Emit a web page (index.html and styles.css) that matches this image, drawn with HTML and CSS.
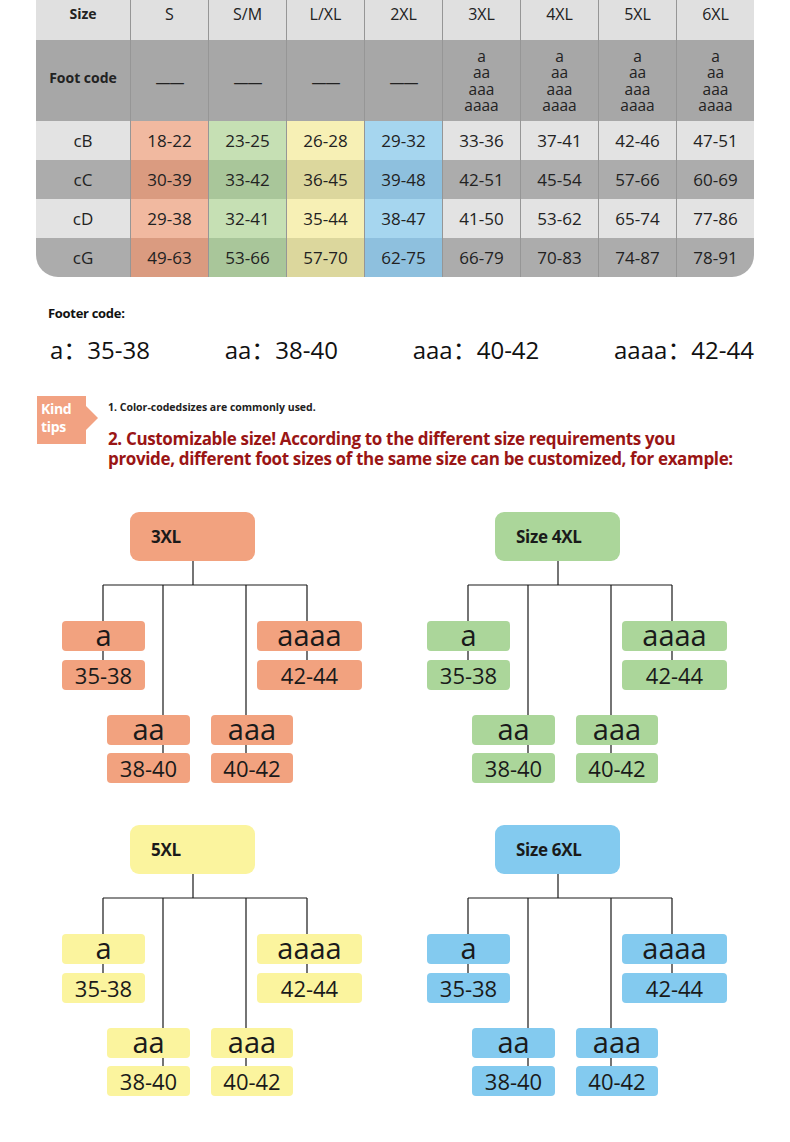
FILE: index.html
```html
<!DOCTYPE html>
<html lang="en">
<head>
<meta charset="utf-8">
<title>Size chart</title>
<link rel="stylesheet" href="styles.css">
</head>
<body>
<div class="page">
  <div class="size-table">
    <div class="row r-head">
      <div class="cell label">Size</div>
      <div class="cell">S</div><div class="cell">S/M</div><div class="cell">L/XL</div><div class="cell">2XL</div>
      <div class="cell">3XL</div><div class="cell">4XL</div><div class="cell">5XL</div><div class="cell">6XL</div>
    </div>
    <div class="row r-foot">
      <div class="cell label">Foot code</div>
      <div class="cell"><span class="dash">——</span></div><div class="cell"><span class="dash">——</span></div><div class="cell"><span class="dash">——</span></div><div class="cell"><span class="dash">——</span></div>
      <div class="cell stack">a<br>aa<br>aaa<br>aaaa</div>
      <div class="cell stack">a<br>aa<br>aaa<br>aaaa</div>
      <div class="cell stack">a<br>aa<br>aaa<br>aaaa</div>
      <div class="cell stack">a<br>aa<br>aaa<br>aaaa</div>
    </div>
    <div class="row r-lt">
      <div class="cell code">cB</div>
      <div class="cell s">18-22</div><div class="cell sm">23-25</div><div class="cell lxl">26-28</div><div class="cell xxl">29-32</div>
      <div class="cell">33-36</div><div class="cell">37-41</div><div class="cell">42-46</div><div class="cell">47-51</div>
    </div>
    <div class="row r-dk">
      <div class="cell code">cC</div>
      <div class="cell s">30-39</div><div class="cell sm">33-42</div><div class="cell lxl">36-45</div><div class="cell xxl">39-48</div>
      <div class="cell">42-51</div><div class="cell">45-54</div><div class="cell">57-66</div><div class="cell">60-69</div>
    </div>
    <div class="row r-lt">
      <div class="cell code">cD</div>
      <div class="cell s">29-38</div><div class="cell sm">32-41</div><div class="cell lxl">35-44</div><div class="cell xxl">38-47</div>
      <div class="cell">41-50</div><div class="cell">53-62</div><div class="cell">65-74</div><div class="cell">77-86</div>
    </div>
    <div class="row r-dk">
      <div class="cell code">cG</div>
      <div class="cell s">49-63</div><div class="cell sm">53-66</div><div class="cell lxl">57-70</div><div class="cell xxl">62-75</div>
      <div class="cell">66-79</div><div class="cell">70-83</div><div class="cell">74-87</div><div class="cell">78-91</div>
    </div>
  </div>

  <div class="footer-code">
    <div class="fc-title">Footer code:</div>
    <div class="fc-values">
      <span>a：35-38</span>
      <span>aa：38-40</span>
      <span>aaa：40-42</span>
      <span>aaaa：42-44</span>
    </div>
  </div>

  <div class="tips">
    <div class="badge">Kind<br>tips</div>
    <div class="tips-text">
      <p class="tip1">1. Color-codedsizes are commonly used.</p>
      <p class="tip2">2. Customizable size! According to the different size requirements you<br>provide, different foot sizes of the same size can be customized, for example:</p>
    </div>
  </div>

  <div class="trees">
    <div class="tree orange">
      <svg class="lines" width="300" height="271" viewBox="0 0 300 271">
        <path d="M131 49V73M41 73H245M41 73V109M101 73V203M184 73V203M245 73V109M41 139V148M245 139V148M101 233V241M184 233V241"/>
      </svg>
      <div class="node top">3XL</div>
      <div class="node n1 k">a</div><div class="node n1v v">35-38</div>
      <div class="node n4 k">aaaa</div><div class="node n4v v">42-44</div>
      <div class="node n2 k">aa</div><div class="node n2v v">38-40</div>
      <div class="node n3 k">aaa</div><div class="node n3v v">40-42</div>
    </div>
    <div class="tree green">
      <svg class="lines" width="300" height="271" viewBox="0 0 300 271">
        <path d="M131 49V73M41 73H245M41 73V109M101 73V203M184 73V203M245 73V109M41 139V148M245 139V148M101 233V241M184 233V241"/>
      </svg>
      <div class="node top">Size 4XL</div>
      <div class="node n1 k">a</div><div class="node n1v v">35-38</div>
      <div class="node n4 k">aaaa</div><div class="node n4v v">42-44</div>
      <div class="node n2 k">aa</div><div class="node n2v v">38-40</div>
      <div class="node n3 k">aaa</div><div class="node n3v v">40-42</div>
    </div>
    <div class="tree yellow">
      <svg class="lines" width="300" height="271" viewBox="0 0 300 271">
        <path d="M131 49V73M41 73H245M41 73V109M101 73V203M184 73V203M245 73V109M41 139V148M245 139V148M101 233V241M184 233V241"/>
      </svg>
      <div class="node top">5XL</div>
      <div class="node n1 k">a</div><div class="node n1v v">35-38</div>
      <div class="node n4 k">aaaa</div><div class="node n4v v">42-44</div>
      <div class="node n2 k">aa</div><div class="node n2v v">38-40</div>
      <div class="node n3 k">aaa</div><div class="node n3v v">40-42</div>
    </div>
    <div class="tree blue">
      <svg class="lines" width="300" height="271" viewBox="0 0 300 271">
        <path d="M131 49V73M41 73H245M41 73V109M101 73V203M184 73V203M245 73V109M41 139V148M245 139V148M101 233V241M184 233V241"/>
      </svg>
      <div class="node top">Size 6XL</div>
      <div class="node n1 k">a</div><div class="node n1v v">35-38</div>
      <div class="node n4 k">aaaa</div><div class="node n4v v">42-44</div>
      <div class="node n2 k">aa</div><div class="node n2v v">38-40</div>
      <div class="node n3 k">aaa</div><div class="node n3v v">40-42</div>
    </div>
  </div>
</div>
</body>
</html>
```

FILE: styles.css
```css
* { box-sizing: border-box; }
html, body { margin: 0; padding: 0; background: #ffffff; }
body { font-family: "Open Sans", "Noto Sans", "Noto Sans CJK SC", sans-serif; color: #1e1e1e; }
.page { width: 790px; height: 1142px; overflow: hidden; }

/* ---------- table ---------- */
.size-table {
  margin-left: 36px;
  width: 718px;
  display: grid;
  grid-template-columns: 94px repeat(8, 78px);
  grid-template-rows: 40px 81px repeat(4, 39px);
  border-radius: 0 0 22px 22px;
  overflow: hidden;
}
.row { display: contents; }
.cell {
  display: flex;
  align-items: center;
  justify-content: center;
  font-size: 16px;
  color: #222;
  border-left: 1px solid #969696;
  text-align: center;
}
.cell.label, .cell.code { border-left: none; }
.r-head .cell { background: #e0e0e0; align-items: flex-start; padding-top: 3px; font-size: 16px; }
.r-head .label { font-weight: 700; font-size: 14px; padding-top: 4px; }
.r-foot .cell { background: #a7a7a7; }
.r-foot .label { font-weight: 700; font-size: 14px; padding-bottom: 6px; }
.dash { font-size: 15px; letter-spacing: -1px; color: #222; position: relative; top: 1px; }
.stack { font-size: 15.5px; line-height: 16.5px; }
.r-lt .cell { background: #e3e3e3; }
.r-dk .cell { background: #acacac; }
.r-lt .cell, .r-dk .cell { font-size: 17px; }
.r-lt .s { background: #f1b9a0; }
.r-dk .s { background: #da9b80; }
.r-lt .sm { background: #c6e0b4; }
.r-dk .sm { background: #a9c69a; }
.r-lt .lxl { background: #f7f0b5; }
.r-dk .lxl { background: #dcd79d; }
.r-lt .xxl { background: #a6d6ef; }
.r-dk .xxl { background: #8ec0de; }

/* ---------- footer code ---------- */
.footer-code { margin-top: 27px; }
.fc-title {
  margin-left: 48px;
  font-size: 13px;
  font-weight: 700;
  letter-spacing: -0.3px;
  line-height: 18px;
  color: #111;
}
.fc-values {
  margin-top: 12px;
  margin-left: 50px;
  width: 704px;
  display: flex;
  justify-content: space-between;
  font-size: 24px;
  line-height: 32px;
  color: #111;
}

/* ---------- tips ---------- */
.tips {
  margin-top: 30px;
  margin-left: 37px;
  display: flex;
  gap: 22px;
}
.badge {
  position: relative;
  width: 49px;
  height: 48px;
  background: #f2a282;
  color: #fff;
  font-weight: 700;
  font-size: 14px;
  line-height: 18px;
  letter-spacing: -0.3px;
  padding: 4px 0 0 4px;
  flex: none;
}
.badge::after {
  content: "";
  position: absolute;
  left: 48px;
  top: 9px;
  border-left: 13px solid #f2a282;
  border-top: 13px solid transparent;
  border-bottom: 13px solid transparent;
}
.tips-text { padding-top: 4px; }
.tip1 {
  margin: 0;
  font-size: 10.5px;
  font-weight: 700;
  line-height: 14px;
  color: #222;
}
.tip2 {
  margin: 15px 0 0;
  font-size: 17px;
  font-weight: 700;
  line-height: 19.5px;
  letter-spacing: -0.35px;
  color: #9a1515;
}

/* ---------- trees ---------- */
.trees {
  margin-top: 44px;
  margin-left: 62px;
  display: grid;
  grid-template-columns: 300px 300px;
  column-gap: 65px;
  row-gap: 42px;
}
.tree { position: relative; width: 300px; height: 271px; }
.lines { position: absolute; left: 0; top: 0; }
.lines path { fill: none; stroke: #1a1a1a; stroke-width: 1.2; }
.node {
  position: absolute;
  display: flex;
  align-items: center;
  justify-content: center;
  border-radius: 4px;
  color: #1a1a1a;
}
.node.top {
  left: 68px; top: 0; width: 125px; height: 49px;
  border-radius: 9px;
  justify-content: flex-start;
  padding-left: 21px;
  font-weight: 700;
  font-size: 17px;
  letter-spacing: -0.3px;
}
.node.k { font-size: 29px; height: 30px; line-height: 30px; padding-bottom: 3px; }
.node.v { font-size: 22px; height: 30px; }
.n1, .n1v { left: 0; width: 83px; }
.n4, .n4v { left: 195px; width: 105px; }
.n2, .n2v { left: 45px; width: 83px; }
.n3, .n3v { left: 149px; width: 82px; }
.n1, .n4 { top: 109px; }
.n1v, .n4v { top: 148px; }
.n2, .n3 { top: 203px; }
.n2v, .n3v { top: 241px; }

.orange .node { background: #f2a27f; }
.green .node { background: #abd69a; }
.yellow .node { background: #fbf49e; }
.blue .node { background: #83caef; }
```
